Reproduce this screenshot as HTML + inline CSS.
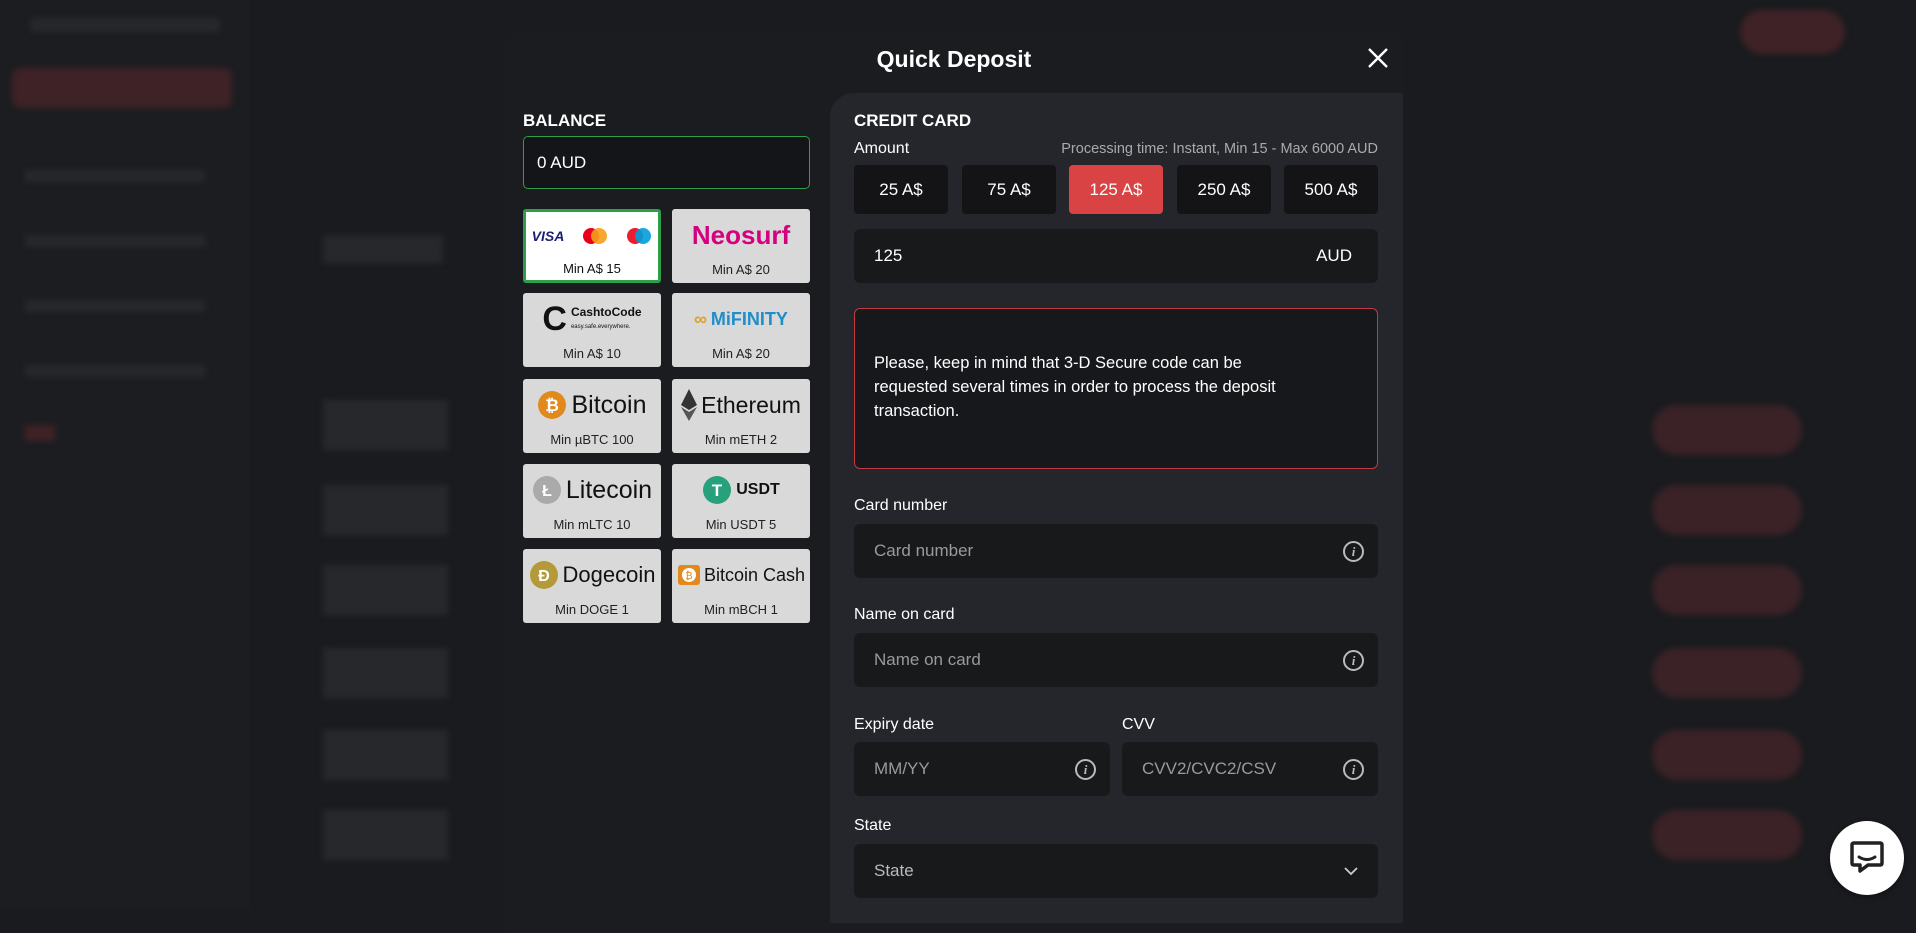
<!DOCTYPE html>
<html><head><meta charset="utf-8"><style>
*{box-sizing:border-box;margin:0;padding:0}
body{width:1916px;height:909px;overflow:hidden;background:#1a1b1f;font-family:"Liberation Sans",Arial,sans-serif;position:relative;color:#fff}
.a{position:absolute}
.bl{filter:blur(3px)}
.modal{left:505px;top:33px;width:898px;height:900px;background:#1b1c20;border-radius:12px}
.rp{left:830px;top:93px;width:573px;height:830px;background:#24262b;border-top-left-radius:24px}
.tile{position:absolute;width:138px;height:74px;background:#d9d9d9;border-radius:3px;color:#222;font-size:13px;text-align:center}
.tile .m{position:absolute;bottom:6px;left:0;right:0}
.tile .lg{position:absolute;top:10px;left:0;right:0;height:32px;display:flex;align-items:center;justify-content:center;gap:4px;font-size:25px;color:#111;white-space:nowrap}
.btn{position:absolute;top:165px;width:94px;height:49px;background:#141416;border-radius:4px;font-size:17px;display:flex;align-items:center;justify-content:center}
.inp{position:absolute;left:854px;width:524px;height:54px;background:#18191b;border-radius:6px;font-size:17px;color:#9a9a9a;padding-left:20px;display:flex;align-items:center}
.lbl{position:absolute;left:854px;font-size:16px;color:#fff}
.info{position:absolute;right:14px;top:17px;width:21px;height:21px;border:2px solid #bbb;border-radius:50%;font:italic bold 13px "Liberation Serif",serif;color:#bbb;display:flex;align-items:center;justify-content:center}
.g{background:#27282c}
.r{background:#3a2226;border-radius:25px}
</style></head><body>
<div class="a" style="left:0;top:0;width:250px;height:909px;background:#1c1d21"></div>
<div class="a bl" style="left:12px;top:68px;width:220px;height:40px;background:#3e2226;border-radius:8px"></div>
<div class="a bl g" style="left:30px;top:18px;width:190px;height:14px;border-radius:4px"></div>
<div class="a bl g" style="left:25px;top:170px;width:180px;height:12px"></div>
<div class="a bl g" style="left:25px;top:235px;width:180px;height:12px"></div>
<div class="a bl g" style="left:25px;top:300px;width:180px;height:12px"></div>
<div class="a bl g" style="left:25px;top:365px;width:180px;height:12px"></div>
<div class="a bl" style="left:25px;top:425px;width:30px;height:16px;background:#3e2226"></div>
<div class="a bl" style="left:1740px;top:10px;width:105px;height:44px;background:#3e2226;border-radius:22px"></div>
<div class="a bl g" style="left:323px;top:235px;width:120px;height:28px"></div>
<div class="a bl g" style="left:323px;top:400px;width:125px;height:50px"></div>
<div class="a bl g" style="left:323px;top:485px;width:125px;height:50px"></div>
<div class="a bl g" style="left:323px;top:565px;width:125px;height:50px"></div>
<div class="a bl g" style="left:323px;top:648px;width:125px;height:50px"></div>
<div class="a bl g" style="left:323px;top:730px;width:125px;height:50px"></div>
<div class="a bl g" style="left:323px;top:810px;width:125px;height:50px"></div>
<div class="a bl r" style="left:1652px;top:405px;width:150px;height:50px"></div>
<div class="a bl r" style="left:1652px;top:485px;width:150px;height:50px"></div>
<div class="a bl r" style="left:1652px;top:565px;width:150px;height:50px"></div>
<div class="a bl r" style="left:1652px;top:648px;width:150px;height:50px"></div>
<div class="a bl r" style="left:1652px;top:730px;width:150px;height:50px"></div>
<div class="a bl r" style="left:1652px;top:810px;width:150px;height:50px"></div>

<div class="a modal"></div>
<div class="a rp"></div>
<div class="a" style="left:505px;width:898px;top:46px;text-align:center;font-size:23px;font-weight:bold">Quick Deposit</div>
<svg class="a" style="left:1367px;top:47px" width="22" height="22" viewBox="0 0 22 22"><path d="M2 2L20 20M20 2L2 20" stroke="#fff" stroke-width="2.4"/></svg>

<div class="a" style="left:523px;top:111px;font-size:17px;font-weight:bold">BALANCE</div>
<div class="a" style="left:523px;top:136px;width:287px;height:53px;border:1.5px solid #2e9e4a;border-radius:5px;background:#141518;font-size:17px;padding:16px 0 0 13px">0 AUD</div>

<div class="tile" style="left:523px;top:209px;background:#fff;border:3px solid #2e9e4a">
 <div class="lg" style="top:8px;gap:18px"><span style="font:italic bold 14px 'Liberation Sans';color:#1a1f71">VISA</span>
 <svg width="26" height="18"><circle cx="9" cy="9" r="8" fill="#eb001b"/><circle cx="17" cy="9" r="8" fill="#f79e1b" opacity=".9"/></svg>
 <svg width="26" height="18"><circle cx="9" cy="9" r="8" fill="#ed1c2e"/><circle cx="17" cy="9" r="8" fill="#009ddd" opacity=".9"/></svg></div>
 <div class="m" style="bottom:4px;color:#111">Min A$ 15</div></div>
<div class="tile" style="left:672px;top:209px"><div class="lg" style="color:#d5007f;font-weight:bold;font-size:26px">Neosurf</div><div class="m">Min A$ 20</div></div>
<div class="tile" style="left:523px;top:293px"><div class="lg"><span style="font-size:34px;font-weight:bold">C</span><span style="font-size:12px;font-weight:bold;line-height:12px;text-align:left">CashtoCode<br><span style="font-size:6px;font-weight:normal">easy.safe.everywhere.</span></span></div><div class="m">Min A$ 10</div></div>
<div class="tile" style="left:672px;top:293px"><div class="lg" style="font-size:18px;font-weight:bold;color:#1f8ec9"><span style="color:#e0a020">∞</span>MiFINITY</div><div class="m">Min A$ 20</div></div>
<div class="tile" style="left:523px;top:379px"><div class="lg"><svg width="30" height="30"><circle cx="15" cy="15" r="14" fill="#e08a1e"/><text x="15" y="21" font-size="17" font-weight="bold" fill="#fff" text-anchor="middle" font-family="Liberation Sans">₿</text></svg>Bitcoin</div><div class="m">Min µBTC 100</div></div>
<div class="tile" style="left:672px;top:379px"><div class="lg" style="font-size:23px"><svg width="16" height="32" viewBox="0 0 16 32"><path d="M8 0L0 16L8 21L16 16Z" fill="#333"/><path d="M0 18L8 32L16 18L8 23Z" fill="#555"/></svg>Ethereum</div><div class="m">Min mETH 2</div></div>
<div class="tile" style="left:523px;top:464px"><div class="lg"><svg width="30" height="30"><circle cx="15" cy="15" r="14" fill="#aaa"/><text x="15" y="21" font-size="16" font-weight="bold" fill="#fff" text-anchor="middle" font-family="Liberation Sans">Ł</text></svg>Litecoin</div><div class="m">Min mLTC 10</div></div>
<div class="tile" style="left:672px;top:464px"><div class="lg" style="font-size:16px;font-weight:bold"><svg width="30" height="30"><circle cx="15" cy="15" r="14" fill="#26a17b"/><text x="15" y="21" font-size="17" font-weight="bold" fill="#fff" text-anchor="middle" font-family="Liberation Sans">T</text></svg>USDT</div><div class="m">Min USDT 5</div></div>
<div class="tile" style="left:523px;top:549px"><div class="lg" style="font-size:22px"><svg width="30" height="30"><circle cx="15" cy="15" r="14" fill="#b59a3a"/><text x="15" y="21" font-size="16" font-weight="bold" fill="#fff" text-anchor="middle" font-family="Liberation Sans">Đ</text></svg>Dogecoin</div><div class="m">Min DOGE 1</div></div>
<div class="tile" style="left:672px;top:549px"><div class="lg" style="font-size:18px;gap:3px"><svg width="24" height="22"><rect x="1" y="1" width="22" height="20" rx="3" fill="#e08a1e"/><circle cx="12" cy="11" r="7" fill="#fff"/><text x="12" y="15" font-size="10" fill="#e08a1e" text-anchor="middle" font-family="Liberation Sans">₿</text></svg>Bitcoin Cash</div><div class="m">Min mBCH 1</div></div>

<div class="a" style="left:854px;top:111px;font-size:17px;font-weight:bold">CREDIT CARD</div>
<div class="a" style="left:854px;top:140px;font-size:16px">Amount</div>
<div class="a" style="right:538px;top:141px;font-size:14.5px;color:#aaa">Processing time: Instant, Min 15 - Max 6000 AUD</div>
<div class="btn" style="left:854px">25 A$</div>
<div class="btn" style="left:962px">75 A$</div>
<div class="btn" style="left:1069px;background:#d94343">125 A$</div>
<div class="btn" style="left:1177px">250 A$</div>
<div class="btn" style="left:1284px">500 A$</div>
<div class="inp" style="top:229px;color:#fff;background:#18191b">125<span style="position:absolute;right:26px">AUD</span></div>
<div class="a" style="left:854px;top:308px;width:524px;height:161px;border:1.5px solid #c2393f;border-radius:6px;background:#17181b;font-size:16.5px;line-height:24px;padding:42px 90px 0 19px">Please, keep in mind that 3-D Secure code can be requested several times in order to process the deposit transaction.</div>

<div class="lbl" style="top:497px">Card number</div>
<div class="inp" style="top:524px">Card number<div class="info">i</div></div>
<div class="lbl" style="top:606px">Name on card</div>
<div class="inp" style="top:633px">Name on card<div class="info">i</div></div>
<div class="lbl" style="top:716px">Expiry date</div>
<div class="lbl" style="left:1122px;top:716px">CVV</div>
<div class="inp" style="top:742px;width:256px">MM/YY<div class="info">i</div></div>
<div class="inp" style="top:742px;left:1122px;width:256px">CVV2/CVC2/CSV<div class="info">i</div></div>
<div class="lbl" style="top:817px">State</div>
<div class="inp" style="top:844px;color:#bbb">State<svg style="position:absolute;right:20px;top:23px" width="14" height="9" viewBox="0 0 14 9"><path d="M1 1L7 7L13 1" stroke="#ccc" stroke-width="1.8" fill="none"/></svg></div>

<div class="a" style="left:1830px;top:821px;width:74px;height:74px;border-radius:50%;background:#fff;box-shadow:0 2px 6px rgba(0,0,0,.4)"></div>
<svg class="a" style="left:1848px;top:838px" width="38" height="38" viewBox="0 0 38 38"><path d="M6 5H32Q34 5 34 7V25Q34 27 32 27H20L12 33V27H6Q4 27 4 25V7Q4 5 6 5Z" fill="none" stroke="#222" stroke-width="3.5" stroke-linejoin="round"/><path d="M11 19Q19 24 27 19" stroke="#222" stroke-width="3" fill="none" stroke-linecap="round"/></svg>
</body></html>
